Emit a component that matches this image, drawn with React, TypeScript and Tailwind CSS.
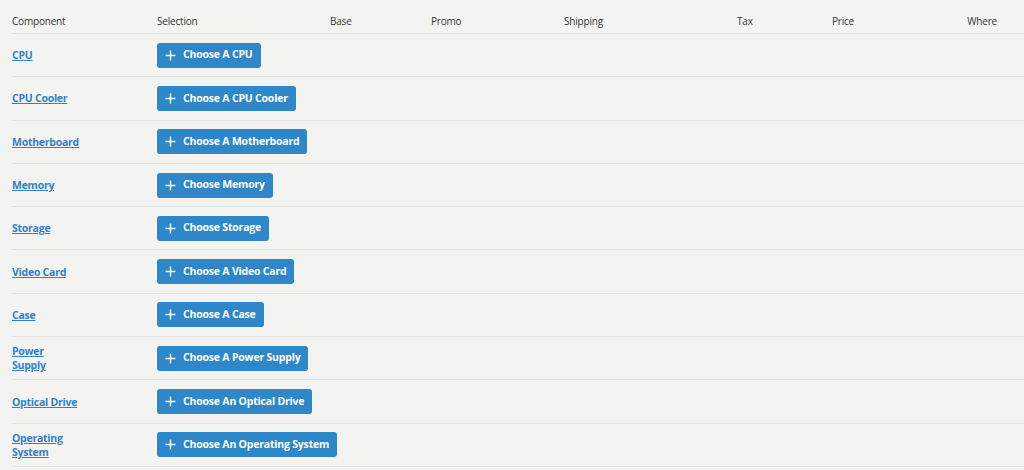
import React from "react";

const rows: { label: React.ReactNode; btn: string }[] = [
  { label: "CPU", btn: "Choose A CPU" },
  { label: "CPU Cooler", btn: "Choose A CPU Cooler" },
  { label: "Motherboard", btn: "Choose A Motherboard" },
  { label: "Memory", btn: "Choose Memory" },
  { label: "Storage", btn: "Choose Storage" },
  { label: "Video Card", btn: "Choose A Video Card" },
  { label: "Case", btn: "Choose A Case" },
  { label: <>Power<br />Supply</>, btn: "Choose A Power Supply" },
  { label: "Optical Drive", btn: "Choose An Optical Drive" },
  { label: <>Operating<br />System</>, btn: "Choose An Operating System" },
];

const cols = "grid grid-cols-[145px_173px_101px_133px_173px_95px_1fr_auto]";

function PlusIcon() {
  return (
    <svg width="11" height="11" viewBox="0 0 11 11" className="shrink-0">
      <path d="M5.5 0.5V10.5M0.5 5.5H10.5" stroke="white" strokeWidth="1.4" fill="none" />
    </svg>
  );
}

export default function App() {
  return (
    <div
      className="w-[1024px] h-[470px] overflow-hidden bg-[#f3f3f2] pl-[12px]"
      style={{ fontFamily: "'Open Sans', 'Segoe UI', sans-serif" }}
    >
      <div className={`${cols} h-[34px] items-end pb-[4px] border-b border-[#e2e2e0] text-[10px] text-[#333] tracking-[-0.2px]`}>
        <div>Component</div>
        <div>Selection</div>
        <div>Base</div>
        <div>Promo</div>
        <div>Shipping</div>
        <div>Tax</div>
        <div>Price</div>
        <div className="text-right pr-[27px]">Where</div>
      </div>
      {rows.map((r, i) => (
        <div
          key={i}
          className={`${cols} h-[43.3px] items-center border-b border-[#e2e2e0]`}
        >
          <a className="text-[10.5px] font-bold text-[#3282c6] underline leading-[14px] tracking-[-0.25px] cursor-pointer">
            {r.label}
          </a>
          <div className="col-span-7">
            <button className="inline-flex items-center h-[25px] pl-[8px] pr-[8px] gap-[7px] bg-[#2d87c8] rounded-[3px] text-white text-[10.5px] font-bold tracking-[-0.2px]">
              <PlusIcon />
              <span>{r.btn}</span>
            </button>
          </div>
        </div>
      ))}
    </div>
  );
}
